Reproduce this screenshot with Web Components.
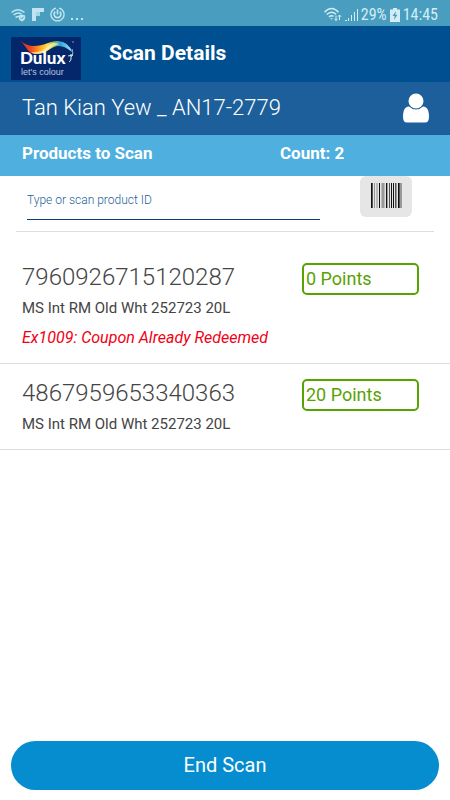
<!DOCTYPE html>
<html lang="en">
<head>
<meta charset="utf-8">
<meta name="viewport" content="width=device-width, initial-scale=1">
<title>Scan Details</title>
<style>
  html, body { margin: 0; }
  body { font-family: Roboto, "Noto Sans", sans-serif; background: #fff; color: #444; }
</style>
</head>
<body>
<scan-screen></scan-screen>
<script>
const define = (name, html, setup) => customElements.define(name, class extends HTMLElement {
  constructor() {
    super();
    this.attachShadow({ mode: 'open' }).innerHTML =
      '<style>*{box-sizing:border-box}h1,h2,h3,p{margin:0;font-size:inherit;font-weight:inherit}svg{display:block}</style>' + html;
    if (setup) setup(this, this.shadowRoot);
  }
});

define('status-bar', `
<style>
  :host { display: flex; justify-content: space-between; align-items: center; height: 26px; padding: 3px 12px 0 11px; background: #499ebf; color: #d3edf6; font: 16px/23px "Roboto Condensed", "Liberation Sans Narrow", Roboto, sans-serif; }
  div { display: flex; align-items: center; }
  .left { gap: 6px; color: #c0e4f1; }
  .right { gap: 3px; }
</style>
<div class="left">
  <svg width="15" height="14" viewBox="0 0 15 14" fill="none" stroke="currentColor" stroke-width="1.6" aria-hidden="true">
    <path d="M.5 4.5Q7 -1 13.5 4.5M2.500 7Q7 3.400 10.500 6.200M4.500 9.500Q6 8.200 8 8.500"/>
    <path d="M11 6.500l3.200 1v2.300q0 2.400-3.200 3.700q-3.200-1.300-3.200-3.700V7.500z" fill="currentColor" stroke="none"/>
    <path d="M9.500 9.800l1.200 1.100 2-2.200" stroke="#499ebf" stroke-width="1"/>
  </svg>
  <svg width="12" height="13" viewBox="0 0 12 13" aria-hidden="true"><path d="M0 0h12v4H8v4H4v5H0z" fill="currentColor"/><path d="M4 4h4v4H4z" fill="#a5d6e8"/></svg>
  <svg width="15" height="15" viewBox="0 0 15 15" fill="none" stroke="currentColor" aria-hidden="true">
    <path d="M6 1.100A6.500 6.500 0 1 0 9 1.100" stroke-width="1.400"/><path d="M5.200 4.700a3.400 3.400 0 1 0 4.600 0M7.500 2.500v5" stroke-width="1.700"/>
  </svg>
  <svg width="12" height="15" viewBox="0 0 12 15" fill="currentColor" role="img" aria-label="More notifications"><path d="M0 11h2v2H0zM5 11h2v2H5zM10 11h2v2h-2z"/></svg>
</div>
<div class="right">
  <svg width="18" height="15" viewBox="0 0 18 15" fill="none" stroke="currentColor" stroke-width="1.500" aria-hidden="true">
    <path d="M.5 5.200Q7.500 -2 14.500 5.200M2.700 7.500Q7.500 3 12 7.200M5 9.900Q7.500 7.800 9.500 9.400"/><path d="M6.300 11.300h2.400l-1.200 1.400z" fill="currentColor" stroke="none"/>
    <path d="M12 8.500v5M10.500 11.800l1.500 1.800 1.500-1.800M15.500 13V8M14 9.700L15.500 8 17 9.700" stroke-width="1"/>
  </svg>
  <svg width="13" height="14" viewBox="0 0 13 14" fill="currentColor" aria-hidden="true"><path d="M0 12h2v1H0zM3 10h1v3H3zM6 7h1v6H6zM9 4h1v9H9zM12 1h1v12h-1z"/></svg>
  <span>29%</span>
  <svg width="10" height="14" viewBox="0 0 10 14" aria-hidden="true"><path d="M3 0h4v1.500h3V14H0V1.500h3z" fill="currentColor"/><path d="M6 3L2.500 8h2.200L4 12l3.500-5.200H5.300z" fill="#499ebf"/></svg>
  <span>14:45</span>
</div>`);

define('brand-logo', `
<style>
  :host { display: block; }
  .name { font: 900 17px Lato, sans-serif; }
  .tagline { font: 9px "Liberation Sans", sans-serif; }
</style>
<svg width="70" height="43" viewBox="0 0 70 43" role="img" aria-label="Dulux let's colour">
  <defs>
    <linearGradient id="flag" gradientUnits="userSpaceOnUse" x1="9" y1="0" x2="62" y2="0"><stop offset="0" stop-color="#c92c27"/><stop offset=".2" stop-color="#ef4423"/><stop offset=".38" stop-color="#ffa51a"/><stop offset=".52" stop-color="#ffe04a"/><stop offset=".62" stop-color="#9fc846"/><stop offset=".76" stop-color="#2aa6d6"/><stop offset="1" stop-color="#aee7fa"/></linearGradient>
  </defs>
  <rect width="70" height="43" fill="#04266b"/>
  <path d="M9 3Q15 9 23 9C33 9 39 4 47 4Q58 5 61 15Q54 9 48 9C40 9 36 17 25 17C17 17 15 9 9 3Z" fill="url(#flag)"/>
  <path d="M20 15Q31 16 36 10T48 7Q41 9 37 13T25 17Q22 17 20 15Z" fill="#fff4c7" opacity=".7"/>
  <path d="M61 12Q63 18 60 20" fill="none" stroke="#8cc5e5" stroke-width="1"/>
  <path d="M60 17v5q0 2-2 3M57 19l5-1" fill="none" stroke="#dceaf2" stroke-width="1"/>
  <circle cx="62" cy="5" r="1" fill="#567198"/>
  <text class="name" x="9" y="27" fill="#fff">Dulux</text>
  <text class="tagline" x="10" y="38" fill="#b4c6df">let's colour</text>
</svg>`);

define('app-header', `
<style>
  :host { display: flex; height: 56px; padding: 11px 11px 0; gap: 28px; background: #004f91; color: #fff; }
  h1 { font-size: 21px; line-height: 32px; font-weight: 700; }
</style>
<brand-logo></brand-logo><h1><slot></slot></h1>`);

define('user-bar', `
<style>
  :host { display: flex; justify-content: space-between; align-items: center; height: 53px; padding: 0 21px 2px 22px; background: #1d5f9b; color: #fff; }
  h2 { font-size: 22px; line-height: 30px; font-weight: 300; }
  button { border: 0; padding: 0; background: none; color: inherit; }
</style>
<h2><slot></slot></h2>
<button type="button" aria-label="Account">
  <svg width="26" height="30" viewBox="0 0 26 30" fill="currentColor"><circle cx="13" cy="8" r="7.500"/><path d="M6 13.500Q9 16.500 13 16.500T20 13.500C24 13.500 26 17 26 24Q26 29.500 22 29.500H4Q0 29.500 0 24C0 17 2 13.500 6 13.500Z"/></svg>
</button>`);

define('list-heading', `
<style>
  :host { display: grid; grid-template-columns: 258fr 148fr; height: 41px; padding: 6px 22px; background: #4fafde; color: #fff; font-size: 17px; line-height: 24px; font-weight: 700; }
</style>
<h3><slot></slot></h3><slot name="count"></slot>`);

define('product-entry', `
<style>
  :host { display: flex; justify-content: space-between; align-items: flex-start; height: 56px; margin: 0 16px; padding: 0 22px 0 11px; gap: 40px; border-bottom: 1px solid #ddd; }
  input { flex: 1; min-width: 0; height: 44px; padding: 5px 0 0; border: 0; border-bottom: 1px solid #0b3f7f; border-radius: 0; background: none; color: #1d5f9b; font: 300 12px Roboto, sans-serif; outline: 0; }
  input::placeholder { color: #1d5f9b; opacity: 1; }
  button { display: grid; place-items: center; width: 52px; height: 41px; padding: 0 0 2px; border: 0; border-radius: 6px; background: #e6e6e6; }
</style>
<input type="text" aria-label="Product ID" placeholder="Type or scan product ID">
<button type="button" aria-label="Scan barcode">
  <svg width="31" height="25" viewBox="0 0 31 25" shape-rendering="crispEdges">
    <path d="M0 0h1v25H0zM8 0h1v25H8zM15 0h1v25h-1zM20 0h1v25h-1zM22 0h1v25h-1zM27 0h1v25h-1z" fill="#111"/>
    <path d="M1 0h1v25H1zM18 0h1v25h-1zM24 0h1v25h-1zM28 0h1v25h-1z" fill="#555"/>
    <path d="M3 0h1v25H3zM11 0h2v25h-2zM16 0h1v25h-1zM25 0h1v25h-1zM29 0h2v25h-2z" fill="#999"/>
    <path d="M5 0h2v25H5zM10 0h1v25h-1zM13 0h1v25h-1z" fill="#bbb"/>
  </svg>
</button>`);

define('product-row', `
<style>
  :host { display: flex; justify-content: space-between; align-items: flex-start; padding: 13px 31px 10px 22px; border-bottom: 1px solid #ddd; }
  h3 { font-size: 24px; line-height: 32px; font-weight: 300; }
  p { font-size: 15px; line-height: 30px; }
  .error { color: #f00014; font-size: 16px; font-style: italic; }
  .points { width: 117px; margin-top: 2px; padding: 0 2px; border: 2px solid #57a300; border-radius: 5px; color: #57a300; font-size: 18px; line-height: 28px; }
</style>
<div><h3></h3><p><slot></slot></p></div>
<div class="points"></div>`, (host, root) => {
  root.querySelector('h3').textContent = host.getAttribute('code');
  root.querySelector('.points').textContent = host.getAttribute('points') + ' Points';
  if (host.hasAttribute('error')) {
    const p = document.createElement('p');
    p.className = 'error';
    p.textContent = host.getAttribute('error');
    root.querySelector('div').append(p);
  }
});

define('primary-button', `
<style>
  :host { display: block; }
  button { display: block; width: 100%; height: 49px; padding: 0 0 2px; border: 0; border-radius: 25px; background: #058dcf; color: #fff; font: 20px/28px Roboto, sans-serif; }
</style>
<button type="button"><slot></slot></button>`);

define('scan-screen', `
<style>
  :host { display: flex; flex-direction: column; min-height: 100vh; }
  main { flex: 1; }
  .list { padding-top: 16px; }
  footer { padding: 11px 11px 10px; }
</style>
<status-bar></status-bar>
<app-header>Scan Details</app-header>
<user-bar>Tan Kian Yew _ AN17-2779</user-bar>
<main>
  <list-heading>Products to Scan<span slot="count">Count: 2</span></list-heading>
  <product-entry></product-entry>
  <div class="list">
    <product-row code="7960926715120287" points="0" error="Ex1009: Coupon Already Redeemed">MS Int RM Old Wht 252723 20L</product-row>
    <product-row code="4867959653340363" points="20">MS Int RM Old Wht 252723 20L</product-row>
  </div>
</main>
<footer><primary-button>End Scan</primary-button></footer>`);
</script>
</body>
</html>
